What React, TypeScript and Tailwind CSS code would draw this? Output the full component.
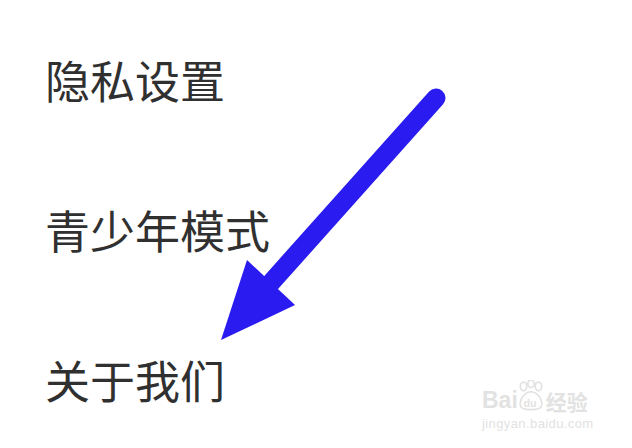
import React from "react";

const items = ["隐私设置", "青少年模式", "关于我们"];

function Arrow() {
  return (
    <svg
      className="pointer-events-none absolute left-0 top-0"
      width="632"
      height="448"
      viewBox="0 0 632 448"
    >
      <line
        x1="436"
        y1="98"
        x2="268"
        y2="286"
        stroke="#2a1cf0"
        strokeWidth="19"
        strokeLinecap="round"
      />
      <polygon points="221,340 247,260 295,305" fill="#2a1cf0" />
    </svg>
  );
}

function Watermark() {
  return (
    <div className="pointer-events-none absolute left-[482px] top-[380px] flex flex-col items-start text-[#e2e2e2]">
      <div className="flex items-end font-['Liberation_Sans',sans-serif] text-[23px] font-bold leading-none">
        <span>Bai</span>
        <svg width="28" height="32" viewBox="0 0 26 30" className="-mx-[1px]">
          <g fill="none" stroke="#e2e2e2" strokeWidth="1.6">
            <ellipse cx="6" cy="6" rx="3" ry="4" />
            <ellipse cx="13" cy="3.5" rx="3" ry="3.5" />
            <ellipse cx="20" cy="6" rx="3" ry="4" />
            <path d="M3 24 C2 16 9 11 13 11 C17 11 24 16 23 24 C22 29 4 29 3 24 Z" />
          </g>
          <text x="6" y="25" fontSize="10" fontWeight="bold" fill="#e2e2e2" fontFamily="Liberation Sans, sans-serif">
            du
          </text>
        </svg>
        <span className="ml-[2px] font-['Noto_Sans_CJK_SC',sans-serif] text-[21px]">经验</span>
      </div>
      <div className="mt-[5px] font-['Liberation_Sans',sans-serif] text-[13px] leading-none tracking-[0.4px]">
        jingyan.baidu.com
      </div>
    </div>
  );
}

export default function App() {
  return (
    <div className="relative h-[448px] w-[632px] overflow-hidden bg-white">
      <ul className="flex flex-col pl-[45px] pt-[4px] font-['Noto_Sans_CJK_SC','Noto_Sans',sans-serif] text-[#303030]">
        {items.map((label) => (
          <li key={label} className="flex h-[150px] items-center text-[45px] leading-none">
            {label}
          </li>
        ))}
      </ul>
      <Arrow />
      <Watermark />
    </div>
  );
}
